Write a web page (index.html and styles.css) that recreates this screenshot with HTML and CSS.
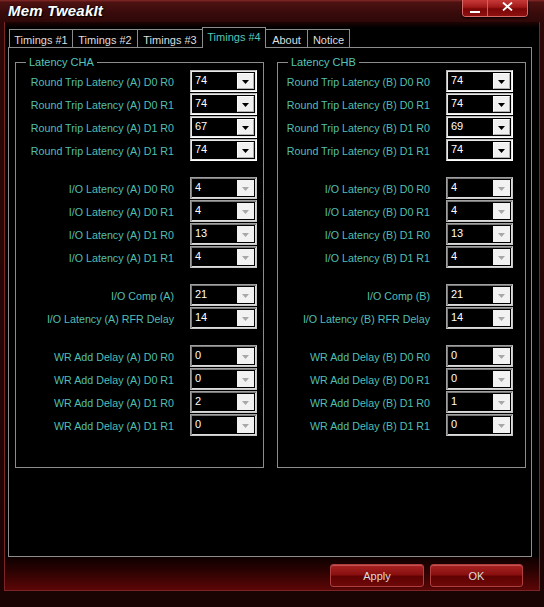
FILE: index.html
```html
<!DOCTYPE html>
<html>
<head>
<meta charset="utf-8">
<title>Mem TweakIt</title>
<link rel="stylesheet" href="styles.css">
</head>
<body>
<div class="window">
  <div class="titlebar">
    <span class="title">Mem TweakIt</span>
    <div class="caption">
      <span class="cap-btn cap-min"><svg width="10" height="2" viewBox="0 0 10 2"><rect width="10" height="2" fill="#fff"/></svg></span>
      <span class="cap-btn cap-close"><svg width="11" height="9" viewBox="0 0 11 9"><path d="M1 0.5 L10 8.5 M10 0.5 L1 8.5" stroke="#fff" stroke-width="1.8" fill="none"/></svg></span>
    </div>
  </div>
  <div class="client">
    <div class="tabs">
      <div class="tab tab-t1">Timings #1</div>
      <div class="tab tab-t2">Timings #2</div>
      <div class="tab tab-t3">Timings #3</div>
      <div class="tab tab-t4 active">Timings #4</div>
      <div class="tab tab-about">About</div>
      <div class="tab tab-notice">Notice</div>
    </div>
    <div class="panel">
      <fieldset class="group group-a">
        <legend>Latency CHA</legend>
        <div class="section">
          <div class="row"><span class="label">Round Trip Latency (A) D0 R0</span><div class="combo"><span class="value">74</span><span class="drop"></span></div></div>
          <div class="row"><span class="label">Round Trip Latency (A) D0 R1</span><div class="combo"><span class="value">74</span><span class="drop"></span></div></div>
          <div class="row"><span class="label">Round Trip Latency (A) D1 R0</span><div class="combo"><span class="value">67</span><span class="drop"></span></div></div>
          <div class="row"><span class="label">Round Trip Latency (A) D1 R1</span><div class="combo"><span class="value">74</span><span class="drop"></span></div></div>
        </div>
        <div class="section">
          <div class="row"><span class="label">I/O Latency (A) D0 R0</span><div class="combo disabled"><span class="value">4</span><span class="drop"></span></div></div>
          <div class="row"><span class="label">I/O Latency (A) D0 R1</span><div class="combo disabled"><span class="value">4</span><span class="drop"></span></div></div>
          <div class="row"><span class="label">I/O Latency (A) D1 R0</span><div class="combo disabled"><span class="value">13</span><span class="drop"></span></div></div>
          <div class="row"><span class="label">I/O Latency (A) D1 R1</span><div class="combo disabled"><span class="value">4</span><span class="drop"></span></div></div>
        </div>
        <div class="section">
          <div class="row"><span class="label">I/O Comp (A)</span><div class="combo disabled"><span class="value">21</span><span class="drop"></span></div></div>
          <div class="row"><span class="label">I/O Latency (A) RFR Delay</span><div class="combo disabled"><span class="value">14</span><span class="drop"></span></div></div>
        </div>
        <div class="section">
          <div class="row"><span class="label">WR Add Delay (A) D0 R0</span><div class="combo disabled"><span class="value">0</span><span class="drop"></span></div></div>
          <div class="row"><span class="label">WR Add Delay (A) D0 R1</span><div class="combo disabled"><span class="value">0</span><span class="drop"></span></div></div>
          <div class="row"><span class="label">WR Add Delay (A) D1 R0</span><div class="combo disabled"><span class="value">2</span><span class="drop"></span></div></div>
          <div class="row"><span class="label">WR Add Delay (A) D1 R1</span><div class="combo disabled"><span class="value">0</span><span class="drop"></span></div></div>
        </div>
      </fieldset>
      <fieldset class="group group-b">
        <legend>Latency CHB</legend>
        <div class="section">
          <div class="row"><span class="label">Round Trip Latency (B) D0 R0</span><div class="combo"><span class="value">74</span><span class="drop"></span></div></div>
          <div class="row"><span class="label">Round Trip Latency (B) D0 R1</span><div class="combo"><span class="value">74</span><span class="drop"></span></div></div>
          <div class="row"><span class="label">Round Trip Latency (B) D1 R0</span><div class="combo"><span class="value">69</span><span class="drop"></span></div></div>
          <div class="row"><span class="label">Round Trip Latency (B) D1 R1</span><div class="combo"><span class="value">74</span><span class="drop"></span></div></div>
        </div>
        <div class="section">
          <div class="row"><span class="label">I/O Latency (B) D0 R0</span><div class="combo disabled"><span class="value">4</span><span class="drop"></span></div></div>
          <div class="row"><span class="label">I/O Latency (B) D0 R1</span><div class="combo disabled"><span class="value">4</span><span class="drop"></span></div></div>
          <div class="row"><span class="label">I/O Latency (B) D1 R0</span><div class="combo disabled"><span class="value">13</span><span class="drop"></span></div></div>
          <div class="row"><span class="label">I/O Latency (B) D1 R1</span><div class="combo disabled"><span class="value">4</span><span class="drop"></span></div></div>
        </div>
        <div class="section">
          <div class="row"><span class="label">I/O Comp (B)</span><div class="combo disabled"><span class="value">21</span><span class="drop"></span></div></div>
          <div class="row"><span class="label">I/O Latency (B) RFR Delay</span><div class="combo disabled"><span class="value">14</span><span class="drop"></span></div></div>
        </div>
        <div class="section">
          <div class="row"><span class="label">WR Add Delay (B) D0 R0</span><div class="combo disabled"><span class="value">0</span><span class="drop"></span></div></div>
          <div class="row"><span class="label">WR Add Delay (B) D0 R1</span><div class="combo disabled"><span class="value">0</span><span class="drop"></span></div></div>
          <div class="row"><span class="label">WR Add Delay (B) D1 R0</span><div class="combo disabled"><span class="value">1</span><span class="drop"></span></div></div>
          <div class="row"><span class="label">WR Add Delay (B) D1 R1</span><div class="combo disabled"><span class="value">0</span><span class="drop"></span></div></div>
        </div>
      </fieldset>
    </div>
    <div class="footer">
      <button class="btn btn-apply">Apply</button>
      <button class="btn btn-ok">OK</button>
    </div>
  </div>
</div>
</body>
</html>
```

FILE: styles.css
```css
* { box-sizing: border-box; }

html, body {
  margin: 0;
  padding: 0;
  background: #120202;
}

body {
  font-family: "Liberation Sans", Arial, sans-serif;
  font-size: 11px;
}

.window {
  width: 544px;
  height: 607px;
  display: flex;
  flex-direction: column;
  background: linear-gradient(to bottom, #8a2a2a 0px, #4e1212 2px, #3a0b0b 12px, #2c0707 24px, #240505 60%, #1a0303 100%);
  overflow: hidden;
}

/* ---------- title bar ---------- */
.titlebar {
  height: 22px;
  flex: none;
  display: flex;
  align-items: flex-start;
}

.title {
  padding-left: 8px;
  padding-top: 2px;
  font-size: 15px;
  line-height: 18px;
  font-weight: bold;
  font-style: italic;
  letter-spacing: 0.2px;
  color: #ffffff;
  text-shadow: 0 0 2px #000, 1px 1px 1px #000;
}

.caption {
  margin-left: auto;
  margin-right: 16px;
  display: flex;
  border: 1px solid #d86a6a;
  border-top: 0;
  border-radius: 0 0 4px 4px;
  overflow: hidden;
  box-shadow: 0 1px 2px #000;
}

.cap-btn {
  height: 16px;
  display: flex;
  align-items: center;
  justify-content: center;
  background: linear-gradient(to bottom, #c83a3a 0%, #a01818 45%, #7a0606 55%, #8e1010 100%);
}

.cap-min {
  width: 25px;
  border-right: 1px solid #d06060;
}

.cap-min svg { margin-top: 8px; }

.cap-close {
  width: 39px;
}

.cap-close svg { margin-top: -3px; }

/* ---------- client ---------- */
.client {
  flex: 1;
  margin: 0 4px 16px 4px;
  border: 1px solid #7a2626;
  border-top: 0;
  display: flex;
  flex-direction: column;
  background: #000;
}

/* ---------- tabs ---------- */
.tabs {
  height: 25px;
  flex: none;
  display: flex;
  align-items: flex-end;
  padding-left: 4px;
  padding-top: 5px;
  background: linear-gradient(to bottom, #1e0404 0px, #000 6px);
}

.tab {
  height: 18px;
  line-height: 18px;
  padding-top: 1px;
  text-align: center;
  color: #dedede;
  background: #000;
  border-top: 1px solid #8c8c8c;
  border-left: 1px solid #8c8c8c;
  white-space: nowrap;
}

.tab-t1 { width: 63px; }
.tab-t2 { width: 65px; }
.tab-t3 { width: 65px; }
.tab-t4 { width: 64px; }
.tab-about { width: 41px; }
.tab-notice { width: 43px; border-right: 1px solid #8c8c8c; }

.tab.active {
  position: relative;
  z-index: 1;
  height: 21px;
  margin-bottom: -1px;
  padding-top: 0;
  line-height: 18px;
  color: #55c6b8;
  border-right: 1px solid #8c8c8c;
}

.tab.active + .tab { border-left: 0; }

/* ---------- panel ---------- */
.panel {
  flex: 1;
  margin-left: 3px;
  width: 524px;
  border: 1px solid #8c8c8c;
  padding: 8px 0 0 6px;
  display: flex;
  align-items: flex-start;
  gap: 13px;
}

.group {
  margin: 0;
  width: 249px;
  border: 1px solid #8c8c8c;
  padding: 1px 0 31px 0;
  display: flex;
  flex-direction: column;
  gap: 16px;
  min-width: 0;
}

.group legend {
  margin-left: 10px;
  padding: 0 3px;
  line-height: 13px;
  color: #55c6b8;
}

.group-a .section { padding-left: 8px; }
.group-b .section { padding-left: 2px; }

.section {
  display: flex;
  flex-direction: column;
  gap: 1px;
}

.row {
  height: 22px;
  display: flex;
  align-items: center;
  gap: 16px;
}

.label {
  width: 150px;
  text-align: right;
  white-space: nowrap;
  font-size: 10.7px;
  color: #52bfb2;
  padding-top: 1px;
}

/* ---------- combo ---------- */
.combo {
  width: 67px;
  height: 22px;
  display: flex;
  background: #000;
  border: 1px solid;
  border-color: #b4b4b4 #ffffff #ffffff #b4b4b4;
  box-shadow: inset 1px 1px 0 #e8e8e8, inset -1px -1px 0 #e8e8e8;
  padding: 2px;
}

.combo .value {
  flex: 1;
  color: #ffffff;
  line-height: 14px;
  padding-left: 2px;
}

.combo .drop {
  width: 17px;
  height: 16px;
  background: #f0f0f0;
  border: 1px solid;
  border-color: #fcfcfc #b0b0b0 #b0b0b0 #fcfcfc;
  display: flex;
  align-items: center;
  justify-content: center;
}

.combo .drop::after {
  content: "";
  width: 7px;
  height: 4px;
  margin-top: 2px;
  background: #000;
  clip-path: polygon(0 0, 100% 0, 50% 100%);
}

.combo.disabled {
  border-color: #a0a0a0 #c8c8c8 #c8c8c8 #a0a0a0;
  box-shadow: inset 1px 1px 0 #7a7a7a, inset -1px -1px 0 #dcdcdc;
}

.combo.disabled .drop {
  background: #f2f2f2;
  border-color: #f2f2f2;
}

.combo.disabled .drop::after {
  background: #a8a8a8;
}

/* ---------- footer ---------- */
.footer {
  height: 33px;
  flex: none;
  display: flex;
  justify-content: flex-end;
  align-items: flex-start;
  gap: 6px;
  padding: 7px 16px 0 0;
  background: linear-gradient(to bottom, #0e0000 0%, #2a0202 40%, #5c0606 100%);
}

.btn {
  height: 23px;
  margin: 0;
  padding: 0;
  font-family: "Liberation Sans", Arial, sans-serif;
  font-size: 11px;
  color: #dcdcdc;
  border: 1px solid #b04040;
  border-radius: 3px;
  background: linear-gradient(to bottom, #a82222 0%, #8a1010 45%, #600202 55%, #6e0808 100%);
  box-shadow: inset 0 1px 0 rgba(255, 170, 170, 0.35), 0 0 1px #000;
}

.btn-apply { width: 94px; }
.btn-ok { width: 93px; }
```
